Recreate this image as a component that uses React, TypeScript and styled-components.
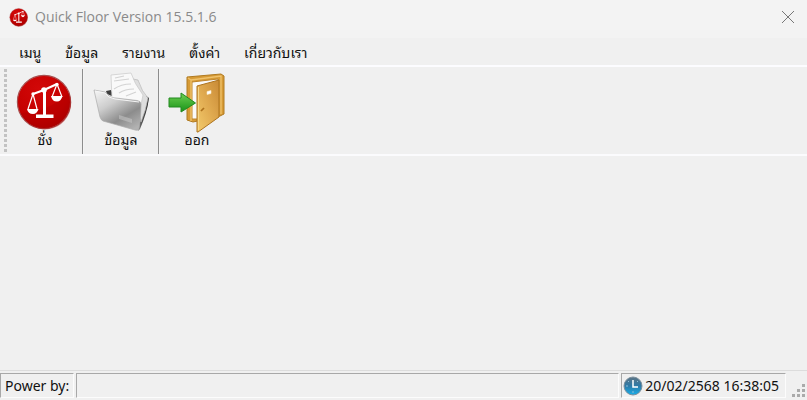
import React from "react";
import styled, { createGlobalStyle } from "styled-components";

const GlobalStyle = createGlobalStyle`
  * { box-sizing: border-box; }
  html, body { margin: 0; }
  body {
    background: #f0f0f0;
    color: #111;
    font-family: "Noto Sans", "Noto Sans Thai Looped", "Loma", "Waree", "Noto Sans Thai", sans-serif;
    font-size: 14px;
  }
  button { font: inherit; color: inherit; border: 0; background: none; padding: 0; }
`;

const Window = styled.div`
  display: flex;
  flex-direction: column;
  min-height: 100vh;
  background: #f0f0f0;
`;

const TitleBar = styled.header`
  display: flex;
  align-items: center;
  gap: 6px;
  height: 38px;
  padding: 0 12px 4px 9px;
  background: #f3f3f3;
`;

const Title = styled.h1`
  flex: 1;
  margin: 0;
  font: 400 14px/20px "Open Sans", sans-serif;
  color: #8a8a8a;
`;

const CloseButton = styled.button`
  display: flex;
  && { padding: 6px; }
  margin-right: -6px;
`;

const MenuBar = styled.nav`
  display: flex;
  height: 29px;
  padding-left: 7px;
  border-bottom: 2px solid #fcfcff;
`;

const MenuButton = styled.button`
  && { padding: 0 12px; }
  white-space: nowrap;
`;

const ToolBar = styled.div`
  display: flex;
  height: 89px;
  padding: 2px 0 0 4px;
  border-bottom: 2px solid #fbfbfd;
`;

const Grip = styled.div`
  width: 3px;
  margin-right: 1px;
  background: repeating-linear-gradient(#c2c2c2 0 3px, #f0f0f0 3px 5px);
`;

const ToolButton = styled.button`
  display: flex;
  flex-direction: column;
  align-items: center;
  width: 74px;
  && { padding-top: 2px; }
  line-height: 18px;

  svg { flex: none; overflow: visible; }
`;

const Separator = styled.div`
  width: 2px;
  background: #8d8d8d;
  border-right: 1px solid #f4f4f4;
`;

const Workspace = styled.main`
  flex: 1;
`;

const StatusBar = styled.footer`
  display: flex;
  gap: 2px;
  height: 30px;
  padding: 2px 0;
  border-top: 1px solid #dcdcdc;
`;

const Panel = styled.div<{ $grow?: boolean }>`
  display: flex;
  align-items: center;
  gap: 2px;
  flex: ${(p) => (p.$grow ? "1" : "none")};
  padding: 0 4px;
  border: 1px solid;
  border-color: #a8a8a8 #fcfcfc #fcfcfc #a8a8a8;
  white-space: nowrap;
`;

const ClockPanel = styled(Panel)`
  padding: 0 6px 0 1px;
`;

const SizeGrip = styled.div`
  display: flex;
  align-items: flex-end;
  width: 19px;
  padding-left: 4px;
`;

const ScalesIcon = ({ size }: { size: number }) => (
  <svg width={size} height={size} viewBox="0 0 60 60" aria-hidden="true">
    <defs>
      <radialGradient id="scales" cx=".4" cy=".25" r=".8">
        <stop offset="0" stopColor="#d20808" />
        <stop offset=".7" stopColor="#c40000" />
        <stop offset="1" stopColor="#a80000" />
      </radialGradient>
    </defs>
    <circle cx="29" cy="31" r="26.6" fill="url(#scales)" stroke="#a85050" strokeWidth="1.2" />
    <path d="M5 42Q32 42 54 22A26 26 0 0 1 8 46z" fill="#ac0000" opacity=".4" />
    <g fill="none" stroke="#fff" strokeLinejoin="round">
      <path d="M18 23L29 19L42 13" strokeWidth="2.2" />
      <path d="M29.5 19V44" strokeWidth="3" />
      <path d="M18 23L13 38M18 23L22 38M42 13L37 26M42 13L47 26" strokeWidth="1.2" />
    </g>
    <circle cx="29" cy="19" r="2.8" fill="#fff" />
    <circle cx="18" cy="23" r="1.7" fill="#fff" />
    <circle cx="42" cy="13.5" r="1.7" fill="#fff" />
    <path d="M12 38H23.5Q22 43 18 43Q13 43 12 38zM36 25H47.5Q46 30.5 42 30.5Q37 30.5 36 25zM21 43.5H38.5V47H21z" fill="#fff" />
  </svg>
);

const FolderIcon = () => (
  <svg width="60" height="60" viewBox="0 0 60 60" aria-hidden="true">
    <defs>
      <linearGradient id="folder" x1=".1" y1="0" x2=".8" y2="1">
        <stop offset="0" stopColor="#f2f2f2" />
        <stop offset=".35" stopColor="#cdcdcd" />
        <stop offset=".7" stopColor="#8c8c8c" />
        <stop offset="1" stopColor="#b2b2b2" />
      </linearGradient>
      <linearGradient id="spine" x1="0" y1="0" x2="1" y2="0">
        <stop offset="0" stopColor="#777" />
        <stop offset="1" stopColor="#1c1c1c" />
      </linearGradient>
    </defs>
    <path d="M47 60L50 31L55 25L58 27Q56 42 49 58z" fill="url(#spine)" />
    <path d="M15 20L20 19L23 26L16 23z" fill="#3f3f3f" />
    <path d="M32 6L47 9Q51 21 57 27Q55 39 50 51L45 32z" fill="#dedede" stroke="#b8b8b8" strokeWidth=".7" />
    <path d="M20 4L40 2Q43 12 52 24Q50 33 48 45L21 28z" fill="#f9f9f9" stroke="#c9c9c9" strokeWidth=".7" />
    <path d="M24 7L33 5M23 18Q30 13 40 13M28 22Q34 18 43 18M35 25L45 21M23 10L38 8" fill="none" stroke="#d3d3d3" strokeWidth="1.2" />
    <path d="M3 19L14 21Q16 22 18 25Q20 27 25 27L46 29.5Q50 30 50 33Q50 47 48 58Q47 60 44 59L12 50Q10 49 9 46z" fill="url(#folder)" stroke="#ababab" strokeWidth=".7" />
    <path d="M4 20L14 22Q17 27 24 28L48 31" fill="none" stroke="#f5f5f5" strokeWidth="1" />
    <path d="M28 44L41 48V52L28 48z" fill="#c6c6c6" opacity=".55" />
  </svg>
);

const ExitIcon = () => (
  <svg width="60" height="60" viewBox="0 0 60 60" aria-hidden="true">
    <defs>
      <linearGradient id="door" x1="0" y1="1" x2="1" y2="0">
        <stop offset="0" stopColor="#f3cb6c" />
        <stop offset=".5" stopColor="#e0aa50" />
        <stop offset="1" stopColor="#c98a35" />
      </linearGradient>
      <linearGradient id="arrow" x1="0" y1="0" x2="0" y2="1">
        <stop offset="0" stopColor="#6fd052" />
        <stop offset="1" stopColor="#189218" />
      </linearGradient>
    </defs>
    <path d="M20 6L54 3L57 5V43L53 45L26 51L20 49z" fill="#d79b36" stroke="#b07a20" />
    <path d="M25 11L51 8V42L30 48H25z" fill="#fafafa" stroke="#bd842b" />
    <path d="M21 7L24 9V50M24 9L54 5V43" fill="none" stroke="#efc26c" strokeWidth="1.3" />
    <path d="M30 15L52 9V46L31 61H30z" fill="url(#door)" stroke="#ad7420" />
    <path d="M31.5 16V59" stroke="#f6d889" strokeWidth="1" />
    <path d="M40 20.5L44 19.5V22.5L40 23.5z" fill="#fff" stroke="#f8e9c7" strokeWidth=".6" />
    <path d="M34 40L37 37" stroke="#ad711c" strokeWidth="1.7" />
    <path d="M2 27H14V22L28.5 32L14 41V36H2z" fill="url(#arrow)" stroke="#238a20" strokeLinejoin="round" />
  </svg>
);

const ClockIcon = () => (
  <svg width="20" height="20" viewBox="0 0 20 20" aria-hidden="true">
    <defs>
      <linearGradient id="clock" x1="0" y1="0" x2="0" y2="1">
        <stop offset="0" stopColor="#5d7484" />
        <stop offset=".48" stopColor="#2f79a6" />
        <stop offset="1" stopColor="#17aeea" />
      </linearGradient>
    </defs>
    <circle cx="10" cy="10" r="9" fill="url(#clock)" stroke="#7b909e" />
    <path d="M10 4V11H15" fill="none" stroke="#fff" strokeWidth="1.5" />
    <path d="M3 10H5M10 15V17M15 5L14 6M5 5L6 6" stroke="#8fbdd6" />
  </svg>
);

const menus = ["เมนู", "ข้อมูล", "รายงาน", "ตั้งค่า", "เกี่ยวกับเรา"];

export default function App() {
  return (
    <Window>
      <GlobalStyle />
      <TitleBar>
        <ScalesIcon size={20} />
        <Title>Quick Floor Version 15.5.1.6</Title>
        <CloseButton type="button" aria-label="Close">
          <svg width="14" height="14" viewBox="0 0 14 14">
            <path d="M1 1L13 13M13 1L1 13" stroke="#777" />
          </svg>
        </CloseButton>
      </TitleBar>
      <MenuBar>
        {menus.map((label) => (
          <MenuButton type="button" key={label}>{label}</MenuButton>
        ))}
      </MenuBar>
      <ToolBar>
        <Grip />
        <ToolButton type="button"><ScalesIcon size={60} />ชั่ง</ToolButton>
        <Separator />
        <ToolButton type="button"><FolderIcon />ข้อมูล</ToolButton>
        <Separator />
        <ToolButton type="button"><ExitIcon />ออก</ToolButton>
      </ToolBar>
      <Workspace />
      <StatusBar>
        <Panel>Power by:</Panel>
        <Panel $grow />
        <ClockPanel><ClockIcon />20/02/2568 16:38:05</ClockPanel>
        <SizeGrip>
          <svg width="14" height="14" viewBox="0 0 14 14" fill="#aaa" aria-hidden="true">
            <path d="M10 0h3v3h-3zM5 5h3v3h-3zM10 5h3v3h-3zM0 10h3v3h-3zM5 10h3v3h-3zM10 10h3v3h-3z" />
          </svg>
        </SizeGrip>
      </StatusBar>
    </Window>
  );
}
